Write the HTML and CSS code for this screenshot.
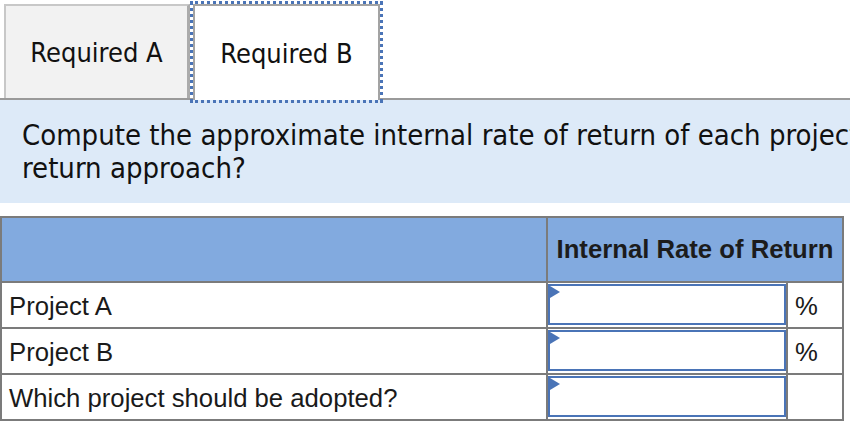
FILE: index.html
```html
<!DOCTYPE html>
<html lang="en">
<head>
<meta charset="utf-8">
<title>Required B</title>
<link rel="stylesheet" href="styles.css">
</head>
<body>
<div class="tabs">
  <div class="tab tab-a">Required A</div>
  <div class="tab tab-b">Required B</div>
</div>
<div class="question">
  <p>Compute the approximate internal rate of return of each project using the internal rate of return approach?</p>
</div>
<div class="grid">
  <div class="cell head"></div>
  <div class="cell head head-title">Internal Rate of Return</div>

  <div class="cell label">Project A</div>
  <div class="cell entry"><div class="input"><span class="flag"></span></div></div>
  <div class="cell unit">%</div>

  <div class="cell label">Project B</div>
  <div class="cell entry"><div class="input"><span class="flag"></span></div></div>
  <div class="cell unit">%</div>

  <div class="cell label">Which project should be adopted?</div>
  <div class="cell entry"><div class="input"><span class="flag"></span></div></div>
  <div class="cell unit"></div>
</div>
</body>
</html>
```

FILE: styles.css
```css
html, body {
  margin: 0;
  padding: 0;
  background: #ffffff;
  overflow: hidden;
}

body {
  width: 850px;
  height: 426px;
  font-family: "Liberation Sans", Arial, sans-serif;
  color: #1a1a1a;
}

.tabs {
  display: flex;
  align-items: flex-end;
  gap: 3px;
  padding: 4px 0 0 4px;
  height: 94px;
  border-bottom: 2px solid #9a9a9a;
}

.tab {
  display: flex;
  align-items: center;
  justify-content: center;
  box-sizing: border-box;
  font-family: "DejaVu Sans Condensed", "DejaVu Sans", sans-serif;
  font-size: 27px;
  color: #111;
}

.tab-a {
  width: 186px;
  height: 94px;
  background: #f2f2f2;
  border-left: 2px solid #c8c8c8;
  border-top: 2px solid #c8c8c8;
  border-right: 3px solid #ababab;
}

.tab-b {
  width: 187px;
  height: 96px;
  margin-bottom: -2px;
  background: #ffffff;
  border: 2px solid #a3a3a3;
  border-bottom: none;
  outline: 3px dotted #4a74b7;
}

.question {
  width: 1400px;
  background: #ddeaf8;
  padding: 19px 0 18px 22px;
  height: 66px;
}

.question p {
  margin: 0;
  width: 1225px;
  font-family: "DejaVu Sans Condensed", "DejaVu Sans", sans-serif;
  font-size: 29px;
  line-height: 33px;
  color: #111;
}

.grid {
  margin-top: 13px;
  display: grid;
  grid-template-columns: 544px 238px 54px;
  grid-template-rows: 63px 44px 44px 44px;
  gap: 2px;
  padding: 2px;
  width: 840px;
  background: #7b7b7b;
  font-size: 25.7px;
}

.cell {
  background: #ffffff;
  display: flex;
  align-items: center;
}

.head {
  background: #82aadf;
}

.head-title {
  grid-column: span 2;
  justify-content: center;
  font-weight: bold;
  color: #1c1c1c;
}

.label {
  padding: 2px 0 0 7px;
}

.entry {
  align-items: stretch;
  padding: 1px 0 2px 0;
}

.input {
  flex: 1;
  position: relative;
  border: 2px solid #4a74b7;
  background: #ffffff;
}

.flag {
  position: absolute;
  left: 0;
  top: 0;
  width: 0;
  height: 0;
  border-top: 6px solid transparent;
  border-bottom: 6px solid transparent;
  border-left: 10px solid #4a74b7;
}

.unit {
  padding: 2px 0 0 7px;
}
```
